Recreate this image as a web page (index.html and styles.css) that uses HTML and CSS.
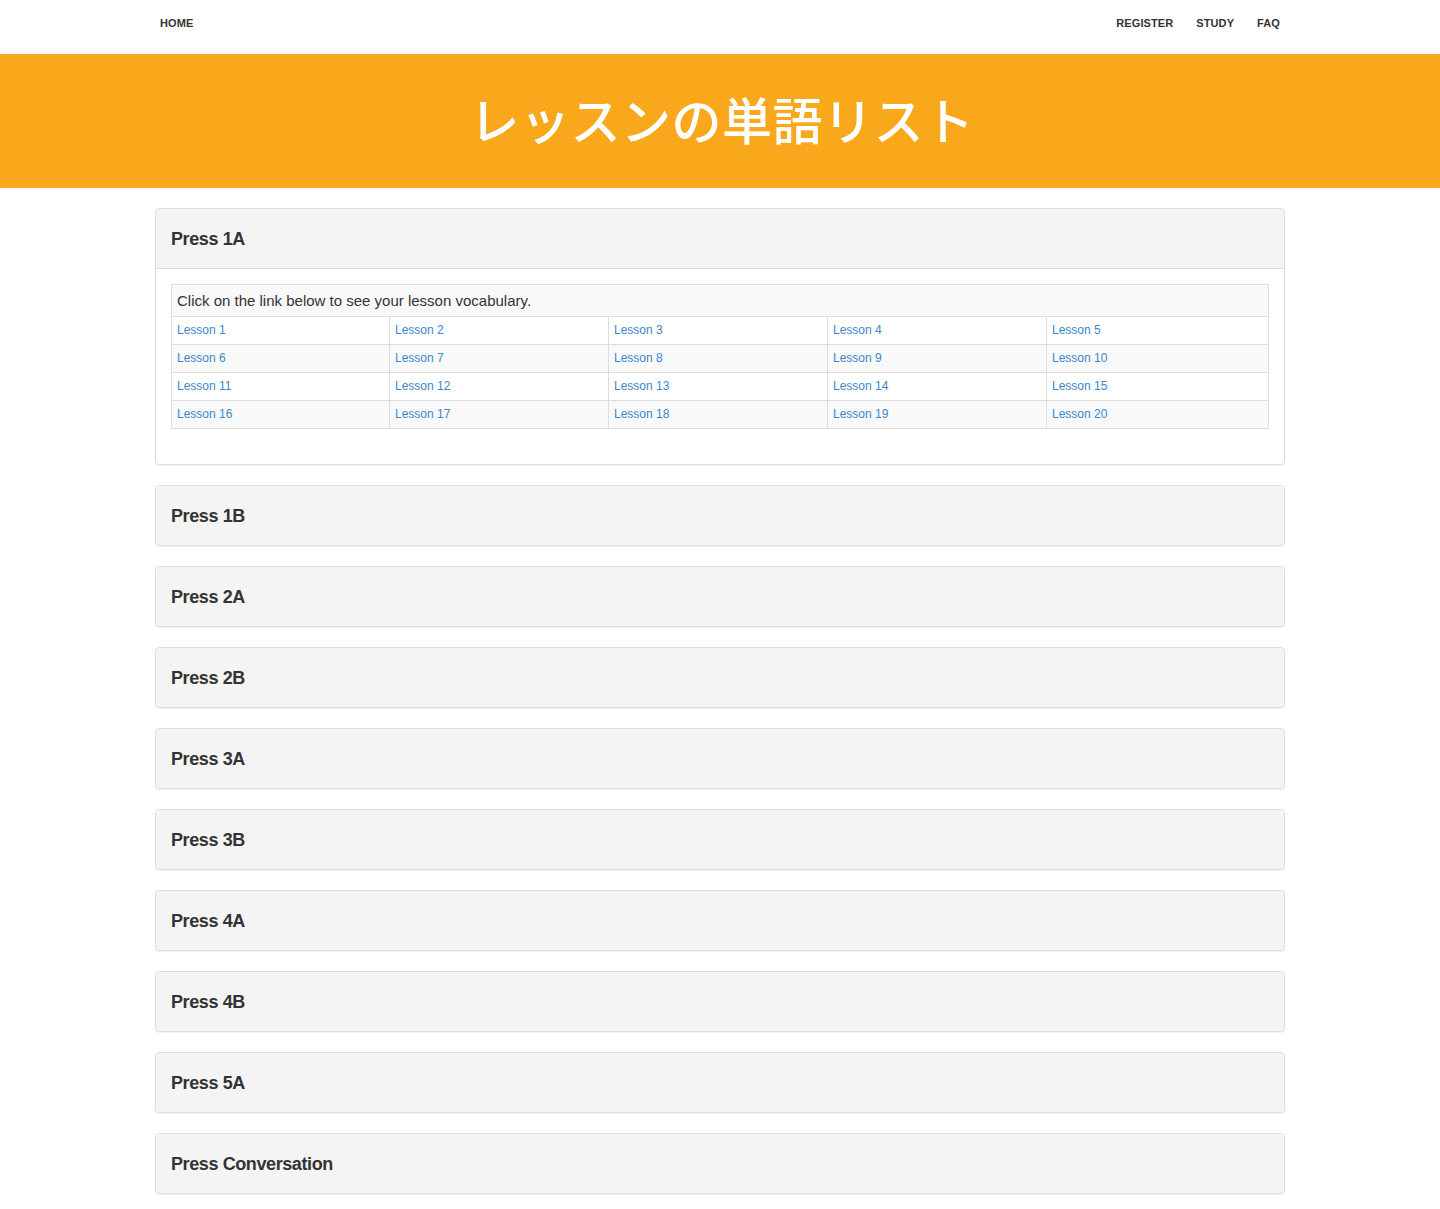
FILE: index.html
```html
<!DOCTYPE html>
<html lang="ja">
<head>
<meta charset="utf-8">
<title>レッスンの単語リスト</title>
<link rel="stylesheet" href="styles.css">
</head>
<body>
<nav class="topnav">
  <div class="nav-inner">
    <a class="nav-link" href="#">HOME</a>
    <div class="nav-right">
      <a class="nav-link" href="#">REGISTER</a>
      <a class="nav-link" href="#">STUDY</a>
      <a class="nav-link" href="#">FAQ</a>
    </div>
  </div>
</nav>
<header class="banner">
  <h1 class="banner-title">レッスンの単語リスト</h1>
</header>
<main class="container">
  <section class="panel">
    <div class="panel-heading open"><h2 class="panel-title">Press 1A</h2></div>
    <div class="panel-body">
      <table class="lessons">
        <colgroup><col class="c1"><col class="c2"><col class="c3"><col class="c4"><col class="c5"></colgroup>
        <thead><tr><th colspan="5">Click on the link below to see your lesson vocabulary.</th></tr></thead>
        <tbody>
          <tr><td><a href="#">Lesson 1</a></td><td><a href="#">Lesson 2</a></td><td><a href="#">Lesson 3</a></td><td><a href="#">Lesson 4</a></td><td><a href="#">Lesson 5</a></td></tr>
          <tr><td><a href="#">Lesson 6</a></td><td><a href="#">Lesson 7</a></td><td><a href="#">Lesson 8</a></td><td><a href="#">Lesson 9</a></td><td><a href="#">Lesson 10</a></td></tr>
          <tr><td><a href="#">Lesson 11</a></td><td><a href="#">Lesson 12</a></td><td><a href="#">Lesson 13</a></td><td><a href="#">Lesson 14</a></td><td><a href="#">Lesson 15</a></td></tr>
          <tr><td><a href="#">Lesson 16</a></td><td><a href="#">Lesson 17</a></td><td><a href="#">Lesson 18</a></td><td><a href="#">Lesson 19</a></td><td><a href="#">Lesson 20</a></td></tr>
        </tbody>
      </table>
    </div>
  </section>
  <section class="panel"><div class="panel-heading"><h2 class="panel-title">Press 1B</h2></div></section>
  <section class="panel"><div class="panel-heading"><h2 class="panel-title">Press 2A</h2></div></section>
  <section class="panel"><div class="panel-heading"><h2 class="panel-title">Press 2B</h2></div></section>
  <section class="panel"><div class="panel-heading"><h2 class="panel-title">Press 3A</h2></div></section>
  <section class="panel"><div class="panel-heading"><h2 class="panel-title">Press 3B</h2></div></section>
  <section class="panel"><div class="panel-heading"><h2 class="panel-title">Press 4A</h2></div></section>
  <section class="panel"><div class="panel-heading"><h2 class="panel-title">Press 4B</h2></div></section>
  <section class="panel"><div class="panel-heading"><h2 class="panel-title">Press 5A</h2></div></section>
  <section class="panel"><div class="panel-heading"><h2 class="panel-title">Press Conversation</h2></div></section>
</main>
</body>
</html>
```

FILE: styles.css
```css
* { box-sizing: border-box; }
html, body {
  margin: 0;
  padding: 0;
  background: #fff;
  font-family: "Liberation Sans", Arial, sans-serif;
  color: #333;
}
.topnav {
  height: 54px;
  background: #fff;
}
.nav-inner {
  width: 1130px;
  margin: 0 auto;
  padding: 0 5px;
  height: 54px;
  display: flex;
  justify-content: space-between;
  align-items: flex-start;
}
.nav-right {
  display: flex;
  gap: 23px;
}
.nav-link {
  display: block;
  font-size: 11px;
  font-weight: bold;
  color: #333;
  text-decoration: none;
  line-height: 13px;
  padding-top: 17px;
  letter-spacing: 0.1px;
}
.banner {
  background: #f9a81c;
  height: 134px;
  display: flex;
  align-items: center;
  justify-content: center;
}
.banner-title {
  margin: 0;
  color: #fff;
  font-family: "Noto Sans CJK JP", "Noto Sans", sans-serif;
  font-weight: 500;
  font-size: 50px;
  line-height: 1;
  letter-spacing: 0.5px;
  padding-left: 4px;
  padding-bottom: 6px;
}
.container {
  width: 1130px;
  margin: 20px auto 0;
  padding-bottom: 20px;
}
.panel {
  border: 1px solid #ddd;
  border-radius: 4px;
  margin-bottom: 20px;
  background: #fff;
  box-shadow: 0 1px 1px rgba(0,0,0,0.05);
  overflow: hidden;
}
.panel-heading {
  background: #f4f4f4;
  padding: 20px 15px 19px;
}
.panel-heading.open {
  border-bottom: 1px solid #ddd;
}
.panel-title {
  margin: 0;
  font-size: 18px;
  font-weight: bold;
  line-height: 20px;
  color: #333;
  letter-spacing: -0.4px;
}
.panel-body {
  padding: 15px 15px 35px;
}
.lessons {
  width: 100%;
  border-collapse: collapse;
  table-layout: fixed;
  border: 1px solid #ddd;
}
.lessons .c1 { width: 218px; }
.lessons .c2, .lessons .c3, .lessons .c4 { width: 219px; }
.lessons th {
  text-align: left;
  font-weight: normal;
  font-size: 15px;
  color: #333;
  background: #f9f9f9;
  padding: 0 5px;
  height: 32px;
  border: 1px solid #ddd;
}
.lessons td {
  font-size: 12px;
  height: 28px;
  padding: 0 5px 2px;
  border: 1px solid #ddd;
  background: #fff;
}
.lessons tbody tr:nth-child(even) td {
  background: #f9f9f9;
}
.lessons a {
  color: #3c87cc;
  text-decoration: none;
}
```
